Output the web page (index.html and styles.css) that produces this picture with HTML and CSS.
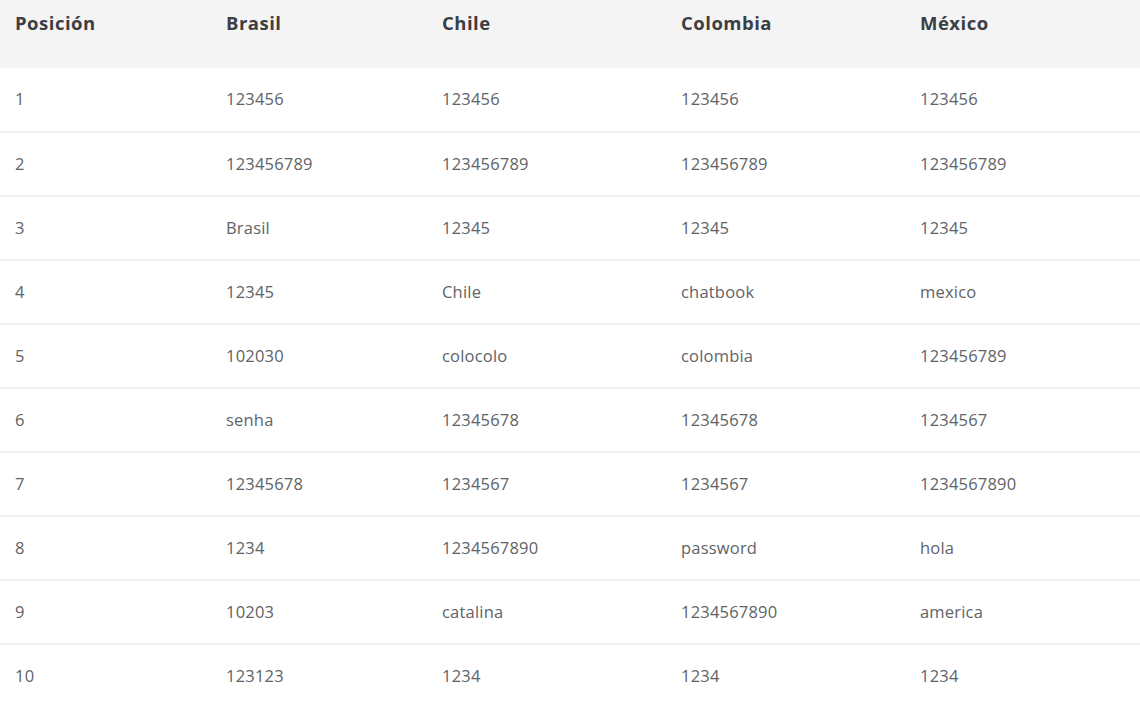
FILE: index.html
```html
<!DOCTYPE html>
<html lang="es">
<head>
<meta charset="utf-8">
<link rel="stylesheet" href="styles.css">
</head>
<body>
<table class="tbl">
  <colgroup>
    <col class="c1"><col class="c2"><col class="c3"><col class="c4"><col class="c5">
  </colgroup>
  <thead>
    <tr><th>Posición</th><th>Brasil</th><th>Chile</th><th>Colombia</th><th>México</th></tr>
  </thead>
  <tbody>
    <tr><td>1</td><td>123456</td><td>123456</td><td>123456</td><td>123456</td></tr>
    <tr><td>2</td><td>123456789</td><td>123456789</td><td>123456789</td><td>123456789</td></tr>
    <tr><td>3</td><td>Brasil</td><td>12345</td><td>12345</td><td>12345</td></tr>
    <tr><td>4</td><td>12345</td><td>Chile</td><td>chatbook</td><td>mexico</td></tr>
    <tr><td>5</td><td>102030</td><td>colocolo</td><td>colombia</td><td>123456789</td></tr>
    <tr><td>6</td><td>senha</td><td>12345678</td><td>12345678</td><td>1234567</td></tr>
    <tr><td>7</td><td>12345678</td><td>1234567</td><td>1234567</td><td>1234567890</td></tr>
    <tr><td>8</td><td>1234</td><td>1234567890</td><td>password</td><td>hola</td></tr>
    <tr><td>9</td><td>10203</td><td>catalina</td><td>1234567890</td><td>america</td></tr>
    <tr><td>10</td><td>123123</td><td>1234</td><td>1234</td><td>1234</td></tr>
  </tbody>
</table>
</body>
</html>
```

FILE: styles.css
```css
html, body {
  margin: 0;
  padding: 0;
  background: #ffffff;
}
body {
  font-family: "Open Sans", "Noto Sans", sans-serif;
  width: 1140px;
  height: 706px;
  overflow: hidden;
}
.tbl {
  width: 1140px;
  border-collapse: collapse;
  table-layout: fixed;
}
.c1 { width: 211px; }
.c2 { width: 216px; }
.c3 { width: 239px; }
.c4 { width: 239px; }
.c5 { width: 235px; }
.tbl th {
  background: #f4f4f5;
  height: 68px;
  box-sizing: border-box;
  padding: 10px 0 0 15px;
  vertical-align: top;
  text-align: left;
  font-size: 18.5px;
  letter-spacing: 0.5px;
  font-weight: 700;
  color: #3b3e42;
}
.tbl td {
  height: 64px;
  box-sizing: border-box;
  padding: 0 0 2px 15px;
  vertical-align: middle;
  font-size: 16.5px;
  letter-spacing: 0.2px;
  color: #606367;
  border-bottom: 2px solid #f1f1f2;
}
.tbl tbody tr:last-child td { border-bottom: none; }
```
